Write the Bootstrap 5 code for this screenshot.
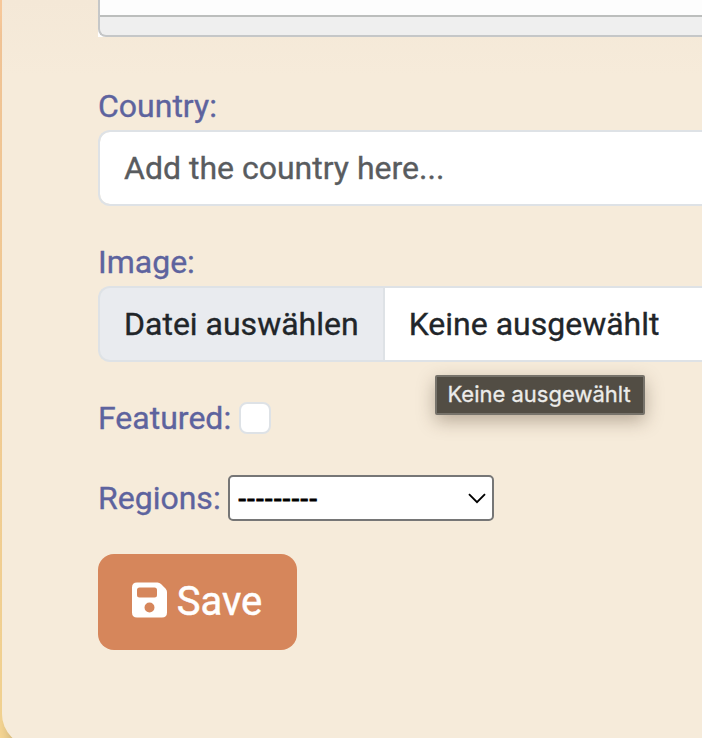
<!DOCTYPE html>
<html lang="en">
<head>
<meta charset="utf-8">
<meta name="viewport" content="width=device-width, initial-scale=1">
<title>Add entry</title>
<link href="https://cdn.jsdelivr.net/npm/bootstrap@5.3.0/dist/css/bootstrap.min.css" rel="stylesheet">
<style>
  html, body { height: 100%; overflow: hidden; }
  body { font: 400 32px/48px Roboto, sans-serif; background: linear-gradient(#f6c799, #f7d794); color: #212529; }
  .form-panel { height: 746px; margin-left: 2px; padding: 0 0 96px 96px; border-radius: 0 0 0 32px; background: linear-gradient(#f4e8d7, #f6ebda 75px); box-shadow: 0 16px 16px -10px rgba(0,0,0,.35); -webkit-text-stroke: .35px; }
  .editor-wrap { height: 37px; background: #fff; margin-bottom: 45px; }
  .editor-frame { height: 37px; border: 2px solid #c5c7c8; border-width: 0 0 2px 2px; border-radius: 0 0 0 8px; background: #efefef; overflow: hidden; }
  .editor-body { height: 17px; background: #fdfdfd; border-bottom: 2px solid #bcbebd; }
  .field { margin-bottom: 32px; color: #5d639e; }
  .field label { line-height: 48px; }
  .form-control, .input-group-text { font-size: 32px; line-height: 48px; padding: 12px 24px; border: 2px solid #dee2e6; border-radius: 12px; }
  .form-control { height: 76px; border-right: 0; border-top-right-radius: 0; border-bottom-right-radius: 0; }
  .form-control::placeholder { color: #595c5f; opacity: 1; }
  .input-group-text { background: #e9ebef; color: #212529; border-right: 0; }
  .input-group > .form-control { margin-left: 0 !important; padding-left: 24px; }
  .form-check-input { width: 32px; height: 32px; margin: 0 0 0 8px; border: 2px solid #dee2e6; border-radius: 8px !important; }
  .region-select { width: 266px; height: 46px; margin-left: 7px; padding: 0 8px; appearance: none; border: 2px solid #767676; border-radius: 5px; color: #000; font: 26.67px/40px "Liberation Sans", sans-serif; -webkit-text-stroke: .8px;
    background: #fff url("data:image/svg+xml,%3Csvg xmlns='http://www.w3.org/2000/svg' width='18' height='11'%3E%3Cpath d='M1 1.2l8 8 8-8' fill='none' stroke='%23000' stroke-width='1.9'/%3E%3C/svg%3E") no-repeat right 6px top 16px; }
  .btn-save { width: 199px; height: 96px; border: 0; border-radius: 16px; background: #d6865b; color: #fff; font-size: 40px; line-height: 60px; padding: 0 1px 1px 0; gap: 10px; -webkit-text-stroke: .5px; }
  .btn-save svg { margin-bottom: 3px; }
  .file-tip { position: absolute; left: 435px; top: 375px; width: 210px; height: 40px; padding-right: 2px; border: 2px solid #77736b; border-radius: 2px; background: #524d44; color: #ececea; font: 22px/35px Inter, sans-serif; box-shadow: 0 6px 18px rgba(70,50,30,.35); white-space: nowrap; -webkit-text-stroke: .3px; }
</style>
</head>
<body>
<main class="form-panel">
  <div class="editor-wrap"><div class="editor-frame"><div class="editor-body"></div></div></div>
  <div class="field">
    <label class="d-block" for="country">Country:</label>
    <input class="form-control" id="country" type="text" placeholder="Add the country here...">
  </div>
  <div class="field">
    <label class="d-block">Image:</label>
    <div class="input-group flex-nowrap">
      <span class="input-group-text">Datei auswählen</span>
      <div class="form-control">Keine ausgewählt</div>
    </div>
  </div>
  <div class="field d-flex align-items-center">
    <label for="featured">Featured:</label>
    <input class="form-check-input" id="featured" type="checkbox">
  </div>
  <div class="field d-flex align-items-center">
    <label for="regions">Regions:</label>
    <select class="region-select" id="regions"><option>---------</option></select>
  </div>
  <button class="btn btn-save d-flex align-items-center justify-content-center" type="button">
    <svg width="35" height="36" viewBox="0 0 35 36" aria-hidden="true"><path fill="#fff" fill-rule="evenodd" d="M5 .5H25.500Q27.500.500 29 2L33.500 6.500Q35 8 35 10V30.500Q35 35.500 30 35.500H5Q0 35.500 0 30.500V5.500Q0 .5 5 .5ZM7.500 5.500Q5 5.500 5 8V13Q5 15.500 7.500 15.500H22.500Q25 15.500 25 13V8Q25 5.500 22.500 5.500ZM17.500 20.500A5 5 0 1 0 17.500 30.500A5 5 0 1 0 17.500 20.500Z"/></svg>
    <span>Save</span>
  </button>
</main>
<div class="file-tip text-center">Keine ausgewählt</div>
<script src="https://cdn.jsdelivr.net/npm/bootstrap@5.3.0/dist/js/bootstrap.bundle.min.js"></script>
</body>
</html>
